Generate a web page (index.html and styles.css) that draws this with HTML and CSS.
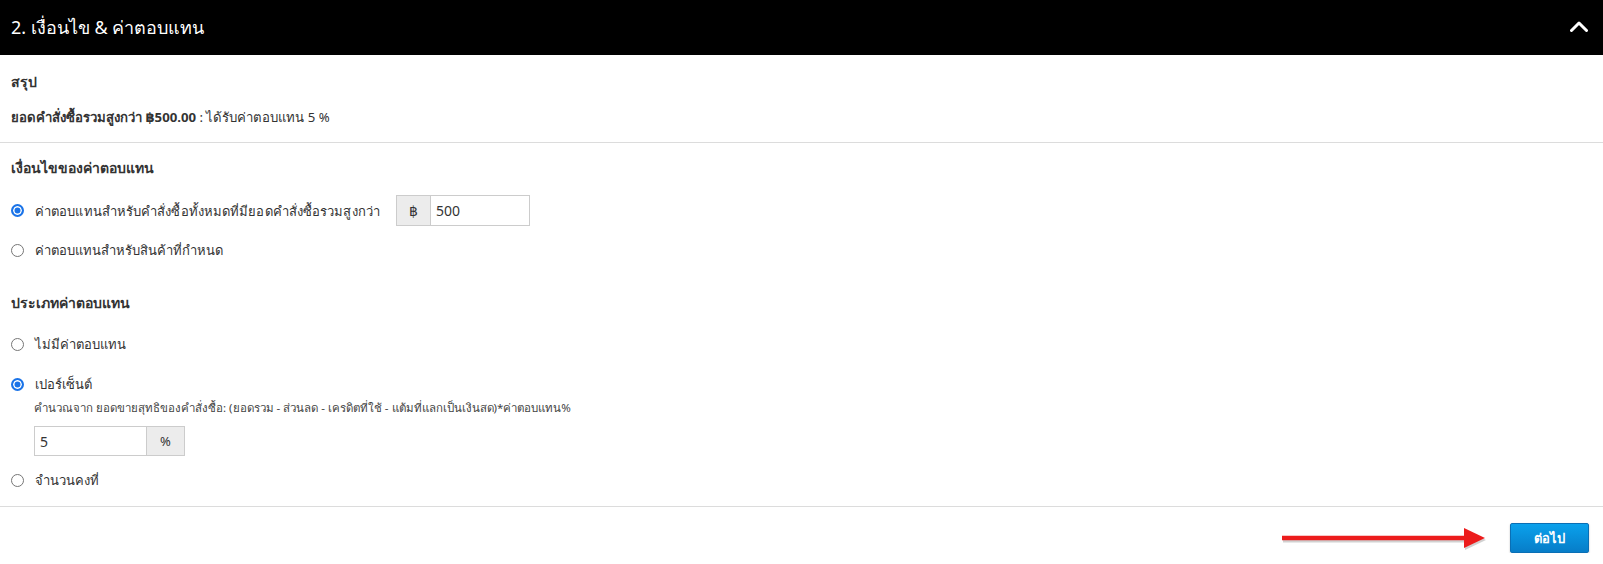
FILE: index.html
```html
<!DOCTYPE html>
<html lang="th">
<head>
<meta charset="utf-8">
<title>เงื่อนไข &amp; ค่าตอบแทน</title>
<link rel="stylesheet" href="styles.css">
</head>
<body>
<div class="panel">
  <div class="panel-header">
    <h2 class="panel-title">2. เงื่อนไข &amp; ค่าตอบแทน</h2>
    <svg class="chevron" width="18" height="12" viewBox="0 0 18 12"><polyline points="1.5,10.5 9,3 16.5,10.5" fill="none" stroke="#fff" stroke-width="3" stroke-linecap="round" stroke-linejoin="round"/></svg>
  </div>

  <div class="section summary">
    <div class="heading">สรุป</div>
    <div class="summary-line"><b>ยอดคำสั่งซื้อรวมสูงกว่า ฿500.00</b> : ได้รับค่าตอบแทน 5 %</div>
  </div>

  <div class="section conditions">
    <div class="heading">เงื่อนไขของค่าตอบแทน</div>
    <div class="radio-row row-1">
      <span class="radio checked"></span>
      <span class="label label-long">ค่าตอบแทนสำหรับคำสั่งซื้อทั้งหมดที่มียอดคำสั่งซื้อรวมสูงกว่า</span>
      <div class="input-group baht">
        <span class="addon addon-baht">฿</span>
        <span class="field field-baht">500</span>
      </div>
    </div>
    <div class="radio-row row-2">
      <span class="radio"></span>
      <span class="label">ค่าตอบแทนสำหรับสินค้าที่กำหนด</span>
    </div>

    <div class="heading heading-type">ประเภทค่าตอบแทน</div>
    <div class="radio-row row-3">
      <span class="radio"></span>
      <span class="label">ไม่มีค่าตอบแทน</span>
    </div>
    <div class="radio-row row-4">
      <span class="radio checked"></span>
      <span class="label">เปอร์เซ็นต์</span>
    </div>
    <div class="desc">คำนวณจาก ยอดขายสุทธิของคำสั่งซื้อ: (ยอดรวม - ส่วนลด - เครดิตที่ใช้ - แต้มที่แลกเป็นเงินสด)*ค่าตอบแทน%</div>
    <div class="input-group pct">
      <span class="field field-pct">5</span>
      <span class="addon addon-pct">%</span>
    </div>
    <div class="radio-row row-5">
      <span class="radio"></span>
      <span class="label">จำนวนคงที่</span>
    </div>
  </div>

  <div class="footer">
    <svg class="arrow" width="207" height="26" viewBox="0 0 207 26">
      <line x1="2" y1="14" x2="186" y2="14" stroke="rgba(0,0,0,0.18)" stroke-width="5"/>
      <polygon points="184,4 205,14 184,24" fill="rgba(0,0,0,0.18)"/>
      <line x1="1" y1="12" x2="186" y2="12" stroke="#ec1c1c" stroke-width="4.5"/>
      <polygon points="183,2 204,12 183,22" fill="#ec1c1c"/>
    </svg>
    <button class="btn-next">ต่อไป</button>
  </div>
</div>
</body>
</html>
```

FILE: styles.css
```css
* { box-sizing: border-box; }
html, body {
  margin: 0;
  padding: 0;
  background: #fff;
}
body {
  font-family: "Noto Sans", "Open Sans", "DejaVu Sans", sans-serif;
  color: #333;
  font-size: 13px;
}
.panel {
  width: 1603px;
}
.panel-header {
  height: 55px;
  background: #000;
  display: flex;
  align-items: center;
  justify-content: space-between;
  padding: 0 15px 0 11px;
}
.panel-title {
  margin: 0;
  color: #fff;
  font-size: 18px;
  font-weight: normal;
  line-height: 26px;
  padding-bottom: 2px;
}
.chevron { display: block; margin-top: -3px; }

.section {
  display: flex;
  flex-direction: column;
  padding-left: 11px;
  border-bottom: 1px solid #dcdcdc;
}
.summary {
  padding-top: 17px;
  padding-bottom: 15px;
}
.heading {
  font-size: 14px;
  font-weight: bold;
  line-height: 20px;
  color: #333;
}
.summary-line {
  margin-top: 15px;
  font-size: 13.2px;
  line-height: 20px;
}
.summary-line b { font-weight: bold; }

.conditions {
  padding-top: 15px;
  padding-bottom: 16px;
}
.radio-row {
  display: flex;
  align-items: center;
  height: 20px;
}
.radio {
  width: 13px;
  height: 13px;
  border-radius: 50%;
  border: 1px solid #767676;
  background: #fff;
  flex: none;
  margin-right: 11px;
}
.radio.checked {
  border: 2px solid #1a73e8;
  background: #1a73e8;
  box-shadow: inset 0 0 0 1.5px #fff;
}
.label {
  font-size: 13px;
  line-height: 20px;
  color: #333;
}
.label-long {
  letter-spacing: 0.1px;
}
.row-1 {
  margin-top: 17px;
  height: 31px;
}
.row-2 { margin-top: 14px; }
.heading-type { margin-top: 33px; }
.row-3 { margin-top: 21px; }
.row-4 { margin-top: 20px; }
.desc {
  margin-top: 6px;
  padding-left: 23px;
  font-size: 11.5px;
  line-height: 16px;
  color: #444;
}
.input-group {
  display: flex;
  border: 1px solid #ccc;
  background: #fff;
}
.input-group.baht {
  margin-left: 16px;
  width: 134px;
  height: 31px;
}
.input-group.pct {
  margin-top: 10px;
  margin-left: 23px;
  width: 151px;
  height: 30px;
}
.addon {
  background: #ececec;
  display: flex;
  align-items: center;
  justify-content: center;
  font-size: 13px;
  color: #333;
}
.addon-baht {
  width: 34px;
  border-right: 1px solid #ccc;
  font-size: 14px;
}
.addon-pct {
  width: 38px;
  border-left: 1px solid #ccc;
}
.field {
  flex: 1;
  display: flex;
  align-items: center;
  padding-left: 5px;
  font-size: 14px;
  color: #333;
}
.row-5 { margin-top: 14px; }

.footer {
  display: flex;
  justify-content: flex-end;
  align-items: center;
  padding: 16px 14px 0 0;
}
.arrow {
  display: block;
  margin-right: 22px;
  margin-top: 2px;
}
.btn-next {
  width: 79px;
  height: 30px;
  border: 1px solid #0a6fb5;
  border-radius: 2px;
  background: linear-gradient(#0aa1ec, #077dc8);
  color: #fff;
  font-family: "Noto Sans", "Open Sans", "DejaVu Sans", sans-serif;
  font-size: 13px;
  font-weight: bold;
  padding: 0;
  box-shadow: 0 1px 2px rgba(0,0,0,0.25);
}
```
